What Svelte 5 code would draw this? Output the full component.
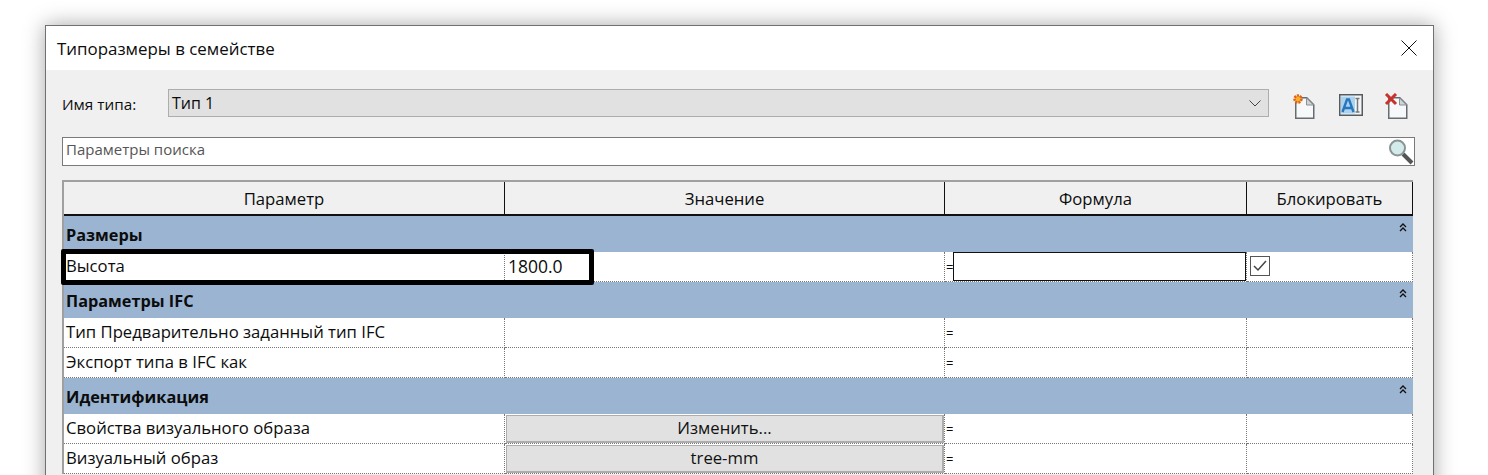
<script>
	// Family types dialog, cropped at the bottom of the window
	const groups = [
		{
			title: 'Размеры',
			rows: [{ name: 'Высота', value: '1800.0', active: true }]
		},
		{
			title: 'Параметры IFC',
			rows: [{ name: 'Тип Предварительно заданный тип IFC' }, { name: 'Экспорт типа в IFC как' }]
		},
		{
			title: 'Идентификация',
			rows: [
				{ name: 'Свойства визуального образа', button: 'Изменить...' },
				{ name: 'Визуальный образ', button: 'tree-mm' }
			]
		}
	]
</script>

<div class="page">
	<div class="dialog">
		<header class="titlebar">
			<span>Типоразмеры в семействе</span>
			<svg class="close" width="16" height="16" viewBox="0 0 16 16">
				<path d="M.5.5l15 15M15.500.5l-15 15" stroke="#111" fill="none" />
			</svg>
		</header>

		<div class="body">
			<div class="typeRow">
				<span class="typeLabel">Имя типа:</span>
				<div class="select">
					<span>Тип 1</span>
					<svg width="12" height="7" viewBox="0 0 12 7">
						<path d="M.5.5L6 6l5.500-5.500" stroke="#444" fill="none" />
					</svg>
				</div>
				<div class="tools">
					<svg width="24" height="26" viewBox="0 0 24 26">
						<path d="M4.750 4.750h11l7 7v13.500h-18z" fill="#f7f8f9" stroke="#666c72" stroke-width="1.500" />
						<path d="M15.500 5v7h7z" fill="#cfd4d9" stroke="#8b9095" />
						<circle cx="7" cy="6" r="3.500" fill="#f7b02e" stroke="#e0601a" stroke-width="2.500" stroke-dasharray="2 1" />
					</svg>
					<svg width="24" height="26" viewBox="0 0 24 26">
						<rect x=".75" y="1.750" width="22.500" height="20.500" fill="#f4f5f6" stroke="#565b60" stroke-width="1.500" />
						<rect x="2" y="3.500" width="14" height="17" fill="#a9d3ef" />
						<path d="M3.500 19L8 6.500h2L14.500 19M5.500 15h7" fill="none" stroke="#2a76bd" stroke-width="2.400" />
						<path d="M16.500 5.500h4M18.500 5.500V19M16.500 19h4" fill="none" stroke="#777" stroke-width="1.500" />
					</svg>
					<svg width="24" height="26" viewBox="0 0 24 26">
						<path d="M4.750 4.750h11l7 7v13.500h-18z" fill="#f7f8f9" stroke="#666c72" stroke-width="1.500" />
						<path d="M15.500 5v7h7z" fill="#cfd4d9" stroke="#8b9095" />
						<path d="M2 1l10 10M12 1L2 11" stroke="#c8322c" stroke-width="3" fill="none" />
					</svg>
				</div>
			</div>

			<div class="search">
				<span>Параметры поиска</span>
				<svg width="26" height="26" viewBox="0 0 26 26">
					<path d="M15 15l9 9" stroke="#555" stroke-width="4" fill="none" />
					<circle cx="9.500" cy="9" r="7.500" fill="#d4ebec" stroke="#8a9494" stroke-width="2" />
				</svg>
			</div>

			<div class="tableWrap">
				<div class="table">
					<div class="head">Параметр</div>
					<div class="head">Значение</div>
					<div class="head">Формула</div>
					<div class="head">Блокировать</div>

					{#each groups as group}
						<div class="group">
							<b>{group.title}</b>
							<svg width="8" height="9" viewBox="0 0 8 9">
								<path d="M1 4l3-3 3 3M1 8l3-3 3 3" fill="none" stroke="#111" stroke-width="1.300" />
							</svg>
						</div>
						{#each group.rows as row}
							<div class="cell">{row.name}</div>
							<div class="cell valueCell">
								{#if row.button}
									<button type="button">{row.button}</button>
								{:else if row.value}
									<span class="number">{row.value}</span>
								{/if}
							</div>
							<div class="cell formulaCell">
								<span>=</span>
								{#if row.active}<div class="formulaInput"></div>{/if}
							</div>
							<div class="cell lockCell">
								{#if row.active}
									<svg width="20" height="20" viewBox="0 0 20 20">
										<rect x=".5" y=".5" width="19" height="19" fill="#fff" stroke="#555" />
										<path d="M4 10l4 4 8-9" fill="none" stroke="#444" stroke-width="1.500" />
									</svg>
								{/if}
							</div>
						{/each}
					{/each}

					<div class="highlight"></div>
				</div>
			</div>
		</div>
	</div>
</div>

<style>
	:global(body) {
		background: #fff;
	}

	.page {
		height: 475px;
		overflow: hidden;
		padding: 25px 0 0 45px;
		box-sizing: border-box;
		font-family: 'Open Sans', 'Noto Sans', sans-serif;
		font-size: 16.700px;
		color: #0c0c0c;
	}

	.dialog {
		width: 1389px;
		height: 600px;
		box-sizing: border-box;
		border: 1px solid #707070;
		background: #f0f0f0;
		box-shadow: 0 0 20px rgba(0, 0, 0, 0.35);
	}

	.titlebar {
		height: 44px;
		background: #fff;
		display: flex;
		align-items: center;
		justify-content: space-between;
		padding: 0 16px 0 11px;
		font-size: 16.900px;
	}

	.body {
		padding: 19px 18px 0 16px;
	}

	.typeRow {
		display: flex;
		align-items: center;
		height: 28px;
	}

	.typeLabel {
		width: 106px;
		flex-shrink: 0;
		font-size: 15.300px;
		padding-top: 1px;
	}

	.select {
		width: 1101px;
		height: 28px;
		box-sizing: border-box;
		flex-shrink: 0;
		background: #e1e1e1;
		border: 1px solid #adadad;
		display: flex;
		align-items: center;
		justify-content: space-between;
		padding: 0 7px 0 3px;
		font-size: 16px;
	}

	.tools {
		display: flex;
		align-items: flex-start;
		gap: 21px;
		margin: 6px 0 0 22px;
		flex-shrink: 0;
	}

	.tools svg:first-child {
		margin-right: 3px;
	}

	.search {
		height: 29px;
		margin-top: 20px;
		box-sizing: border-box;
		background: #fff;
		border: 1px solid #7a7a7a;
		display: flex;
		align-items: center;
		justify-content: space-between;
		padding-left: 3px;
		font-size: 15px;
		color: #555;
	}

	.search span {
		margin-top: -6px;
	}

	.tableWrap {
		margin-top: 14px;
		width: 1351px;
		border-top: 2px solid #a0a0a0;
		border-left: 2px solid #a0a0a0;
		box-sizing: border-box;
	}

	.table {
		position: relative;
		display: grid;
		grid-template-columns: 441px 440px 302px 166px;
		background: #fff;
	}

	.head {
		height: 34px;
		box-sizing: border-box;
		background: #f0f0f0;
		border-right: 1px solid #111;
		border-bottom: 2px solid #111;
		display: flex;
		align-items: center;
		justify-content: center;
		padding-top: 1px;
	}

	.group {
		grid-column: 1 / -1;
		height: 36px;
		box-sizing: border-box;
		background: #9ab4d1;
		display: flex;
		align-items: center;
		justify-content: space-between;
		padding: 2px 6px 0 2px;
		font-size: 16.300px;
	}

	.group svg {
		align-self: flex-start;
		margin: 5px 0 0;
	}

	.group b {
		font-weight: 700;
	}

	.cell {
		height: 30px;
		box-sizing: border-box;
		border-right: 1px dotted #777;
		border-bottom: 1px dotted #777;
		display: flex;
		align-items: center;
		padding: 0 2px 3px;
		white-space: nowrap;
	}

	.valueCell {
		padding: 0 0 0 1px;
	}

	.number {
		font-size: 17.500px;
		margin: -1px 0 0 2px;
	}

	.valueCell button {
		width: 100%;
		height: 28px;
		padding: 0 0 1px;
		font: inherit;
		color: #111;
		background: #e1e1e1;
		border: 2px solid #adadad;
		border-top-width: 1px;
		border-left-width: 1px;
	}

	.formulaCell {
		padding: 0 0 0 1px;
		font-size: 13px;
	}

	.formulaInput {
		flex: 1;
		height: 29px;
		box-sizing: border-box;
		background: #fff;
		border: 1px solid #111;
	}

	.lockCell {
		padding: 0 0 2px 3px;
	}

	.highlight {
		position: absolute;
		left: -3px;
		top: 67px;
		width: 533px;
		height: 36px;
		box-sizing: border-box;
		border: 5px solid #000;
		border-radius: 2px;
	}
</style>
